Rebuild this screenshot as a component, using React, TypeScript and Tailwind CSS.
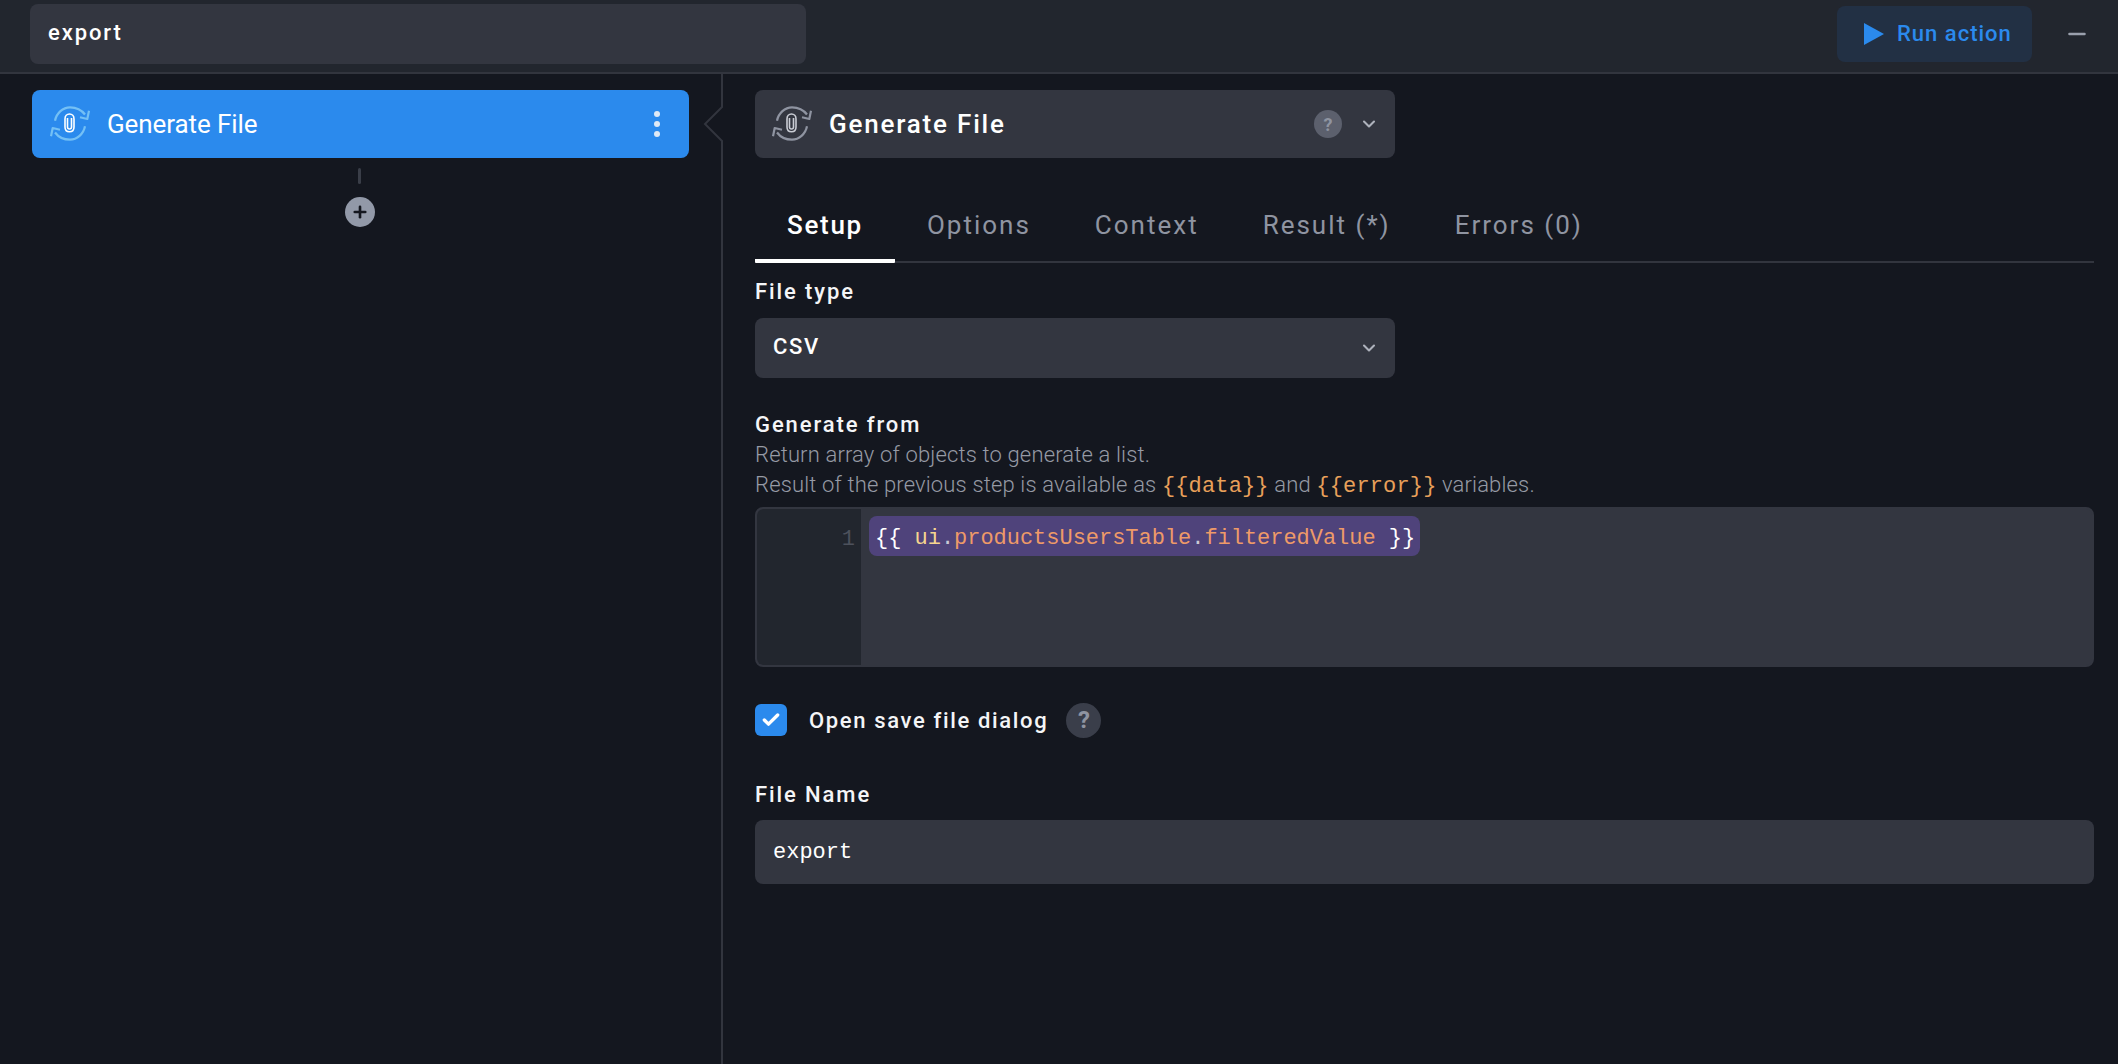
import { Check, ChevronDown, Minus, Plus } from "lucide-react";
import clsx from "clsx";

const tabs = ["Setup", "Options", "Context", "Result (*)", "Errors (0)"];

const mono = "font-['Liberation_Mono',monospace]";

const GenerateIcon = ({ className, clip }: { className: string; clip: string }) => (
  <svg viewBox="0 0 40 40" fill="none" stroke="currentColor" strokeWidth="2.2" className={className}>
    <path d="M5 16.7 C6.5 9 13 3.3 20 3.3 C26 3.3 31.5 5.8 35 10.5" />
    <path d="M39 6.7 L37.3 15 L30 13.3" strokeLinejoin="round" />
    <path d="M35 22.3 C33.5 30 27 35.7 20 35.7 C14 35.7 8.5 33.2 5 28.5" />
    <path d="M1 32.3 L2.7 24 L10 25.7" strokeLinejoin="round" />
    <g stroke={clip} strokeWidth="1.6">
      <path d="M24 23 V15 C24 12 22 10 19.5 10 C17 10 15 12 15 15 V23 C15 26 17 27.7 19.5 27.7 C22 27.7 24 26 24 23" />
      <path d="M21.5 14 V23 C21.5 24.2 20.6 25 19.5 25 C18.4 25 17.5 24.2 17.5 23 V14" />
    </g>
  </svg>
);

const Label = ({ children }: { children: string }) => (
  <div className="text-[22px] leading-[28px] font-medium tracking-[1.9px] text-[#f4f5f7]">{children}</div>
);

export default function App() {
  return (
    <div className="h-screen w-full overflow-hidden bg-[#14171f] font-['Roboto',sans-serif] text-white flex flex-col">
      <header className="h-[74px] shrink-0 bg-[#22262e] border-b-2 border-[#32353e] flex items-start pl-[30px] pr-[28px]">
        <div className="mt-[4px] w-[776px] h-[60px] rounded-lg bg-[#333640] flex items-center px-[18px] pb-[3px] text-[22px] font-medium tracking-[1.9px]">
          export
        </div>
        <div className="ml-auto mt-[6px] flex items-center">
          <button className="w-[195px] h-[56px] rounded-lg bg-[#223044] flex items-center pl-[27px] text-[#2b8aed] text-[22px] font-medium tracking-[1px]">
            <svg viewBox="0 0 20 22" className="w-[20px] h-[22px] mr-[13px] fill-current">
              <path d="M0 0 L20 11 L0 22 Z" />
            </svg>
            <span className="pb-[2px]">Run action</span>
          </button>
          <Minus className="ml-[32px] w-[26px] h-[26px] text-[#9aa0ad]" strokeWidth={2.2} />
        </div>
      </header>

      <main className="flex-1 flex min-h-0">
        <aside className="w-[721px] shrink-0 pl-[32px] pr-[32px] pt-[16px] flex flex-col">
          <div className="h-[68px] rounded-lg bg-[#2b8aed] flex items-center pl-[18px] pr-[29px]">
            <GenerateIcon className="w-[40px] h-[40px] text-[#74c0f5]" clip="#ffffff" />
            <span className="ml-[17px] text-[26px] tracking-[-0.1px]">Generate File</span>
            <div className="ml-auto flex flex-col gap-[4px]">
              <span className="w-[6px] h-[6px] rounded-full bg-[#dfe9f5]" />
              <span className="w-[6px] h-[6px] rounded-full bg-[#dfe9f5]" />
              <span className="w-[6px] h-[6px] rounded-full bg-[#dfe9f5]" />
            </div>
          </div>
          <div className="mt-[10px] pr-[2px] flex flex-col items-center">
            <div className="w-[3px] h-[16px] rounded bg-[#3a3e48]" />
            <div className="mt-[13px] w-[30px] h-[30px] rounded-full bg-[#9299a8] flex items-center justify-center">
              <Plus className="w-[18px] h-[18px] text-[#14171f]" strokeWidth={3.5} />
            </div>
          </div>
        </aside>

        <section className="relative flex-1 min-w-0 border-l-2 border-[#32353e] pl-[32px] pr-[24px] pt-[16px]">
          <svg viewBox="0 0 20 36" className="absolute left-[-20px] top-[32px] w-[20px] h-[36px]" fill="#14171f" stroke="#32353e" strokeWidth="2">
            <path d="M20 0 L2 18 L20 36" />
          </svg>

          <div className="w-[640px] h-[68px] rounded-lg bg-[#333640] flex items-center pl-[17px] pr-[16px]">
            <GenerateIcon className="w-[40px] h-[40px] text-[#8f94a1]" clip="#c9ccd4" />
            <span className="ml-[17px] text-[26px] font-medium tracking-[1.8px]">Generate File</span>
            <span className="ml-auto w-[28px] h-[28px] rounded-full bg-[#5c606d] text-[#8f94a1] flex items-center justify-center text-[18px] font-bold">
              ?
            </span>
            <ChevronDown className="ml-[17px] w-[20px] h-[20px] text-[#aeb2bc]" strokeWidth={2.5} />
          </div>

          <nav className="mt-[34px] flex border-b-2 border-[#32353e] h-[71px]">
            {tabs.map((tab, i) => (
              <div
                key={tab}
                className={clsx(
                  "px-[32px] h-[71px] pt-[14px] text-[26px]",
                  i === 0
                    ? "text-white font-medium tracking-[1.7px] border-b-4 border-white rounded-[1px]"
                    : "text-[#8f94a1] tracking-[2px]"
                )}
              >
                {tab}
              </div>
            ))}
          </nav>

          <div className="mt-[15px]">
            <Label>File type</Label>
          </div>
          <div className="mt-[12px] w-[640px] h-[60px] rounded-lg bg-[#333640] flex items-center pl-[18px] pr-[16px]">
            <span className="pb-[4px] text-[22px] font-medium tracking-[1.6px]">CSV</span>
            <ChevronDown className="ml-auto w-[20px] h-[20px] text-[#aeb2bc]" strokeWidth={2.5} />
          </div>

          <div className="mt-[33px]">
            <Label>Generate from</Label>
          </div>
          <p className="mt-[1px] text-[22px] leading-[30px] font-light tracking-[0.15px] text-[#969aa5]">
            Return array of objects to generate a list.
            <br />
            Result of the previous step is available as{" "}
            <span className={clsx(mono, "text-[#e8a05a]")}>{"{{data}}"}</span> and{" "}
            <span className={clsx(mono, "text-[#e8a05a]")}>{"{{error}}"}</span> variables.
          </p>

          <div className="mt-[5px] h-[160px] rounded-lg bg-[#333640] border-2 border-[#333640] flex overflow-hidden">
            <div className={clsx(mono, "w-[104px] shrink-0 bg-[#22262e] rounded-l-md text-right pr-[6px] pt-[18px] text-[22px] leading-[26px] text-[#4d515c]")}>
              1
            </div>
            <div className="pl-[8px] pt-[7px]">
              <div className={clsx(mono, "w-[551px] h-[40px] rounded-lg bg-[#4f437b] pl-[6px] pt-[5px] text-[22px] leading-[35px] tracking-[-0.03px] whitespace-pre text-white")}>
                {"{{ "}
                <span className="text-[#f5d58f]">ui</span>
                <span className="text-[#c9c9d6]">.</span>
                <span className="text-[#ee9a68]">productsUsersTable</span>
                <span className="text-[#c9c9d6]">.</span>
                <span className="text-[#ee9a68]">filteredValue</span>
                {" }}"}
              </div>
            </div>
          </div>

          <div className="mt-[35px] h-[36px] flex items-center">
            <div className="w-[32px] h-[32px] rounded-md bg-[#2b8aed] flex items-center justify-center">
              <Check className="w-[20px] h-[20px] text-white" strokeWidth={4} />
            </div>
            <span className="ml-[22px] text-[22px] font-medium tracking-[1.65px] text-[#f4f5f7]">Open save file dialog</span>
            <span className="ml-[18px] w-[35px] h-[35px] rounded-full bg-[#3a3e4a] text-[#8f94a1] flex items-center justify-center text-[24px] font-bold">
              ?
            </span>
          </div>

          <div className="mt-[43px]">
            <Label>File Name</Label>
          </div>
          <div className={clsx(mono, "mt-[11px] h-[64px] rounded-lg bg-[#333640] flex items-center pl-[18px] text-[22px]")}>
            export
          </div>
        </section>
      </main>
    </div>
  );
}
